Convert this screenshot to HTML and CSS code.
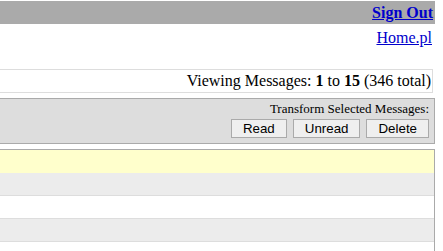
FILE: index.html
```html
<!DOCTYPE html>
<html lang="en">
<head>
    <meta charset="UTF-8">
    <meta name="viewport" content="width=device-width, initial-scale=1.0">
    <title>Messages</title>
    <link rel="stylesheet" href="styles.css">
</head>
<body>

    <!-- Header -->
    <div class="top-bar">
        <a href="#" class="sign-out">Sign Out</a>
    </div>
    <div class="home-line">
        <a href="#">Home.pl</a>
    </div>

    <!-- Message count -->
    <div class="viewing">
        Viewing Messages: <b>1</b> to <b>15</b> (346 total)
    </div>

    <!-- Toolbar -->
    <div class="toolbar">
        <div class="toolbar-label">Transform Selected Messages:</div>
        <div class="toolbar-buttons">
            <button class="tool-btn">Read</button>
            <button class="tool-btn">Unread</button>
            <button class="tool-btn">Delete</button>
        </div>
    </div>

    <!-- Message list -->
    <div class="message-list">
        <div class="msg-row unread"></div>
        <div class="msg-row odd"></div>
        <div class="msg-row"></div>
        <div class="msg-row odd"></div>
        <div class="msg-row"></div>
    </div>

</body>
</html>
```

FILE: styles.css
```css
/* Page */
body {
    font-family: "Liberation Serif", "Times New Roman", serif;
    font-size: 16px;
    color: #000;
    margin: 1px 8px 0 -10px;
    overflow: hidden;
}

a {
    color: #0000cc;
}

/* Header */
.top-bar {
    background-color: #aaaaaa;
    height: 23px;
    line-height: 23px;
    text-align: right;
    padding-right: 2px;
}

.sign-out {
    font-weight: bold;
}

.home-line {
    text-align: right;
    line-height: 18px;
    padding: 5px 3px 0 0;
}

/* Message count */
.viewing {
    margin: 22px 2px 0 0;
    border: 1px solid #dddddd;
    line-height: 22px;
    text-align: right;
    padding-right: 1px;
}

/* Toolbar */
.toolbar {
    margin-top: 5px;
    background-color: #dddddd;
    border: 1px solid #aaaaaa;
    padding: 2px 5px 5px 0;
    text-align: right;
}

.toolbar-label {
    font-size: 13px;
    line-height: 15px;
}

.toolbar-buttons {
    display: flex;
    justify-content: flex-end;
    gap: 6px;
    margin-top: 3px;
}

.tool-btn {
    font-family: "Liberation Sans", Arial, sans-serif;
    font-size: 13.33px;
    line-height: 15px;
    background-color: #efefef;
    border: 1px solid #aaaaaa;
    color: #000;
    padding: 1px 11px;
    margin: 0;
    cursor: pointer;
}

/* Message list */
.message-list {
    margin-top: 5px;
    border-top: 1px solid #aaaaaa;
    border-right: 1px solid #aaaaaa;
    border-left: 1px solid #aaaaaa;
}

.msg-row {
    height: 22px;
    border-bottom: 1px solid #dddddd;
    background-color: #ffffff;
}

.msg-row.odd {
    background-color: #ececec;
}

.msg-row.unread {
    background-color: #ffffcc;
    border-bottom-color: #ffffcc;
}
```
